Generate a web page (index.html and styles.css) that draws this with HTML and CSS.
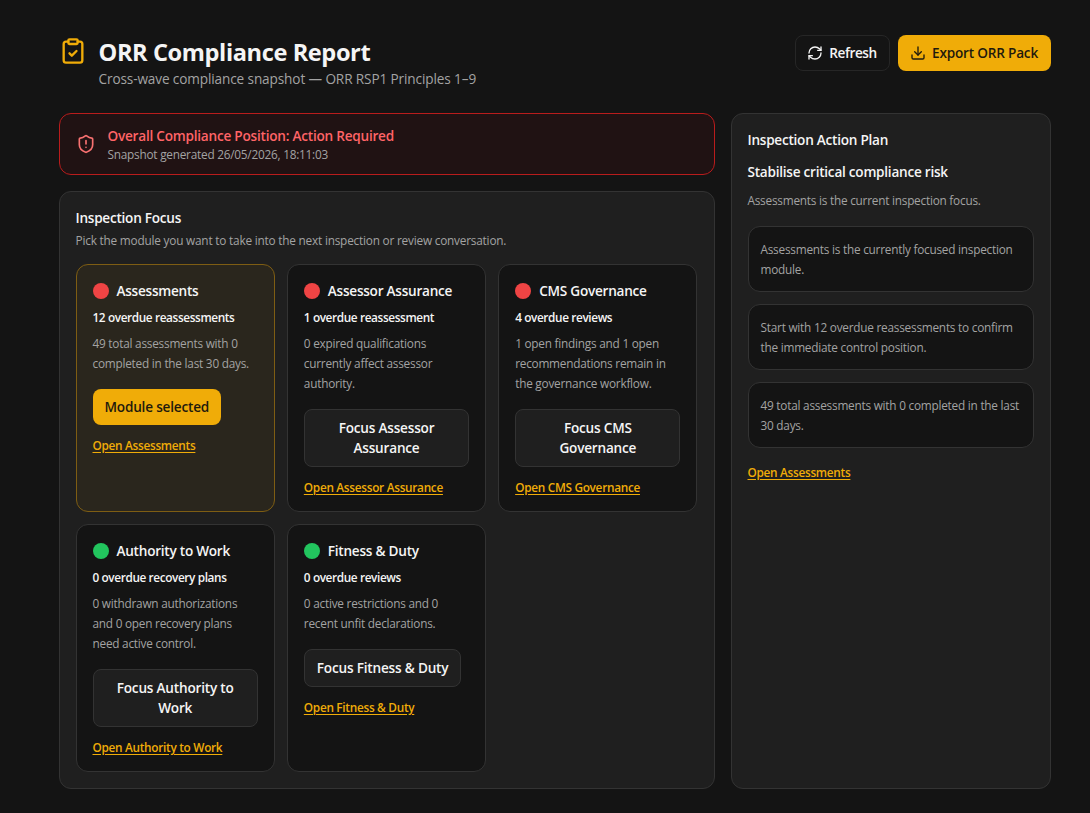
FILE: index.html
```html
<!DOCTYPE html>
<html lang="en">
<head>
    <meta charset="UTF-8">
    <meta name="viewport" content="width=device-width, initial-scale=1.0">
    <title>ORR Compliance Report</title>
    <link rel="stylesheet" href="styles.css">
</head>
<body>
    <div class="page">
        <header class="header">
            <div class="heading">
                <svg class="heading-icon" viewBox="0 0 24 24">
                    <rect x="8" y="2" width="8" height="4" rx="1"/>
                    <path d="M16 4h2a2 2 0 0 1 2 2v14a2 2 0 0 1-2 2H6a2 2 0 0 1-2-2V6a2 2 0 0 1 2-2h2"/>
                    <path d="m9 14 2 2 4-4"/>
                </svg>
                <div>
                    <h1>ORR Compliance Report</h1>
                    <p class="subtitle">Cross-wave compliance snapshot — ORR RSP1 Principles 1–9</p>
                </div>
            </div>
            <div class="actions">
                <button class="btn btn-ghost">
                    <svg viewBox="0 0 24 24">
                        <path d="M3 12a9 9 0 0 1 9-9 9.75 9.75 0 0 1 6.74 2.74L21 8"/>
                        <path d="M21 3v5h-5"/>
                        <path d="M21 12a9 9 0 0 1-9 9 9.75 9.75 0 0 1-6.74-2.74L3 16"/>
                        <path d="M8 16H3v5"/>
                    </svg>
                    <span>Refresh</span>
                </button>
                <button class="btn btn-primary btn-export">
                    <svg viewBox="0 0 24 24">
                        <path d="M12 15V3"/>
                        <path d="M21 15v4a2 2 0 0 1-2 2H5a2 2 0 0 1-2-2v-4"/>
                        <path d="m7 10 5 5 5-5"/>
                    </svg>
                    <span>Export ORR Pack</span>
                </button>
            </div>
        </header>

        <div class="layout">
            <main class="main">
                <div class="alert">
                    <svg class="alert-icon" viewBox="0 0 24 24">
                        <path d="M20 13c0 5-3.5 7.5-7.66 8.95a1 1 0 0 1-.67-.01C7.5 20.5 4 18 4 13V6a1 1 0 0 1 1-1c2 0 4.5-1.2 6.24-2.72a1.17 1.17 0 0 1 1.52 0C14.51 3.81 17 5 19 5a1 1 0 0 1 1 1z"/>
                        <path d="M12 8v4"/>
                        <path d="M12 16h.01"/>
                    </svg>
                    <div>
                        <p class="alert-title">Overall Compliance Position: Action Required</p>
                        <p class="alert-time">Snapshot generated 26/05/2026, 18:11:03</p>
                    </div>
                </div>

                <section class="panel">
                    <h2>Inspection Focus</h2>
                    <p class="hint">Pick the module you want to take into the next inspection or review conversation.</p>
                    <div class="modules">
                        <article class="module selected">
                            <h3><i class="dot red"></i><span>Assessments</span></h3>
                            <p class="status">12 overdue reassessments</p>
                            <p class="text">49 total assessments with 0 completed in the last 30 days.</p>
                            <button class="btn btn-primary">Module selected</button>
                            <a class="link" href="#">Open Assessments</a>
                        </article>
                        <article class="module">
                            <h3><i class="dot red"></i><span>Assessor Assurance</span></h3>
                            <p class="status">1 overdue reassessment</p>
                            <p class="text">0 expired qualifications currently affect assessor authority.</p>
                            <button class="btn btn-focus">Focus Assessor Assurance</button>
                            <a class="link" href="#">Open Assessor Assurance</a>
                        </article>
                        <article class="module">
                            <h3><i class="dot red"></i><span>CMS Governance</span></h3>
                            <p class="status">4 overdue reviews</p>
                            <p class="text">1 open findings and 1 open recommendations remain in the governance workflow.</p>
                            <button class="btn btn-focus">Focus CMS Governance</button>
                            <a class="link" href="#">Open CMS Governance</a>
                        </article>
                        <article class="module">
                            <h3><i class="dot green"></i><span>Authority to Work</span></h3>
                            <p class="status">0 overdue recovery plans</p>
                            <p class="text">0 withdrawn authorizations and 0 open recovery plans need active control.</p>
                            <button class="btn btn-focus">Focus Authority to Work</button>
                            <a class="link" href="#">Open Authority to Work</a>
                        </article>
                        <article class="module">
                            <h3><i class="dot green"></i><span>Fitness &amp; Duty</span></h3>
                            <p class="status">0 overdue reviews</p>
                            <p class="text">0 active restrictions and 0 recent unfit declarations.</p>
                            <button class="btn btn-focus">Focus Fitness &amp; Duty</button>
                            <a class="link" href="#">Open Fitness &amp; Duty</a>
                        </article>
                    </div>
                </section>
            </main>

            <aside class="panel plan">
                <h2>Inspection Action Plan</h2>
                <h3>Stabilise critical compliance risk</h3>
                <p class="text">Assessments is the current inspection focus.</p>
                <ul class="steps">
                    <li>Assessments is the currently focused inspection module.</li>
                    <li>Start with 12 overdue reassessments to confirm the immediate control position.</li>
                    <li>49 total assessments with 0 completed in the last 30 days.</li>
                </ul>
                <a class="link" href="#">Open Assessments</a>
            </aside>
        </div>
    </div>
</body>
</html>
```
FILE: styles.css
```css
* {
    box-sizing: border-box;
    margin: 0;
    padding: 0;
}

body {
    background: #141414;
    color: #f5f5f5;
    font-family: "Segoe UI", "Open Sans", "Noto Sans", sans-serif;
    font-size: 13.6px;
    letter-spacing: -0.23px;
    line-height: 20px;
}

svg {
    width: 16px;
    height: 16px;
    flex-shrink: 0;
    fill: none;
    stroke: currentColor;
    stroke-width: 2;
    stroke-linecap: round;
    stroke-linejoin: round;
}

.page {
    padding: 35px 39.5px 24px 58.5px;
}

.header {
    display: flex;
    justify-content: space-between;
    align-items: flex-start;
    margin-bottom: 24px;
}

.heading {
    display: flex;
    gap: 12px;
    padding-top: 2px;
}

.heading-icon {
    width: 28px;
    height: 28px;
    color: #f0ac08;
}

h1 {
    margin: -1px 0 1px;
    font-size: 23.6px;
    font-weight: 700;
    letter-spacing: -0.4px;
    line-height: 32px;
}

h2, h3 {
    font-size: 13.6px;
    font-weight: 600;
    letter-spacing: -0.25px;
    line-height: 20px;
}

.subtitle {
    color: #a3a3a3;
    letter-spacing: -0.12px;
}

.actions {
    display: flex;
    gap: 8px;
}

.btn {
    display: inline-flex;
    align-items: center;
    justify-content: center;
    gap: 6px;
    padding: 8px 12px;
    border: none;
    border-radius: 8px;
    color: #f5f5f5;
    font: inherit;
    font-weight: 600;
    letter-spacing: -0.2px;
    text-align: center;
}

.btn-ghost {
    width: 95px;
    height: 36px;
    background: transparent;
    border: 1px solid #262626;
    letter-spacing: -0.4px;
}

.btn-primary {
    background: #f0ac08;
    color: #1f1a0d;
}

.btn-export {
    width: 153px;
}

.btn-focus {
    background: #1f1f1f;
    border: 1px solid #333;
}

.layout {
    display: grid;
    grid-template-columns: 1fr 320px;
    gap: 16px;
}

.main {
    display: flex;
    flex-direction: column;
    gap: 16px;
}

.alert {
    display: flex;
    align-items: center;
    gap: 12px;
    padding: 12px 16px;
    background: #201213;
    border: 1px solid #b91c1c;
    border-radius: 12px;
}

.alert-icon {
    width: 20px;
    height: 20px;
    color: #f87171;
}

.alert-title {
    color: #ff6467;
    font-weight: 600;
}

.alert-time {
    color: #a3a3a3;
    font-size: 11.8px;
    line-height: 16px;
}

.panel {
    padding: 16px;
    background: #1f1f1f;
    border: 1px solid #333;
    border-radius: 12px;
}

.hint {
    margin: 4px 0 16px;
    color: #a3a3a3;
    font-size: 11.8px;
    letter-spacing: -0.2px;
    line-height: 16px;
}

.modules {
    display: grid;
    grid-template-columns: repeat(3, 1fr);
    gap: 12px;
}

.module {
    display: flex;
    flex-direction: column;
    align-items: flex-start;
    min-height: 248px;
    padding: 16px;
    background: #141414;
    border: 1px solid #333;
    border-radius: 12px;
}

.module.selected {
    background: #2a261d;
    border-color: #7e5d13;
}

.module h3 {
    display: flex;
    align-items: center;
    gap: 8px;
}

.dot {
    width: 16px;
    height: 16px;
    border-radius: 50%;
}

.red {
    background: #ef4444;
}

.green {
    background: #22c55e;
}

.status {
    margin: 8px 0;
    font-size: 11.8px;
    font-weight: 600;
    letter-spacing: -0.38px;
    line-height: 16px;
}

.text {
    color: #a3a3a3;
    font-size: 11.8px;
    line-height: 20px;
}

.module .btn {
    margin: 16px 0 12px;
}

.link {
    color: #f0ac08;
    font-size: 11.8px;
    font-weight: 600;
    letter-spacing: -0.29px;
    line-height: 16px;
    text-underline-offset: 2px;
}

.plan h3 {
    margin: 12px 0 8px;
}

.steps {
    display: flex;
    flex-direction: column;
    gap: 12px;
    margin: 16px 0;
    list-style: none;
}

.steps li {
    padding: 12px;
    background: #141414;
    border: 1px solid #333;
    border-radius: 12px;
    color: #a3a3a3;
    font-size: 11.8px;
    line-height: 20px;
}

.plan .link {
    display: block;
}
```
